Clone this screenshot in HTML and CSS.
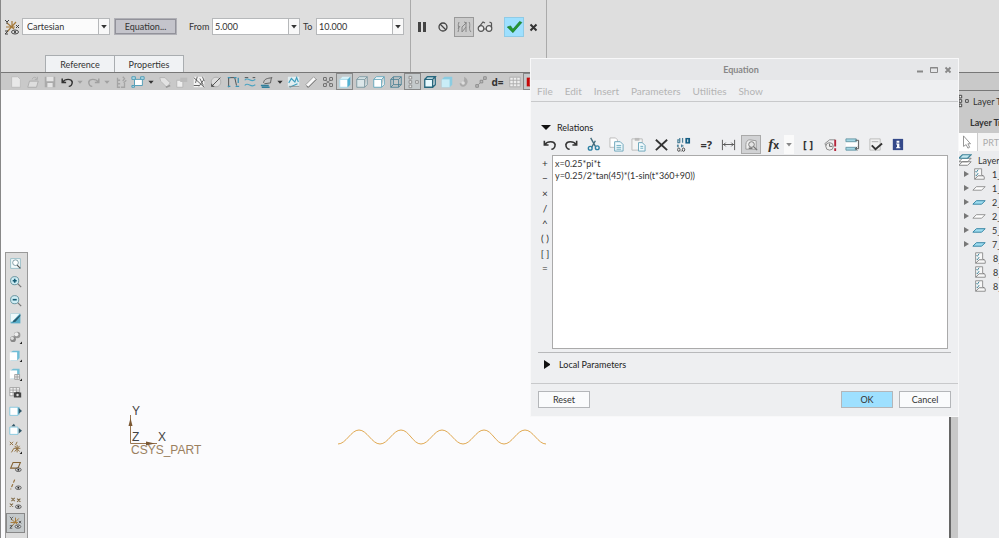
FILE: index.html
```html
<!DOCTYPE html>
<html lang="en">
<head>
<meta charset="utf-8">
<title>Equation</title>
<link rel="stylesheet" href="styles.css">
</head>
<body>
<svg class="defs" aria-hidden="true">
  <symbol id="new" viewBox="0 0 16 16"><path d="M3 2h7l3 3v9H3z" fill="#e8e8e8" stroke="#bbb"/></symbol>
  <symbol id="open" viewBox="0 0 16 16"><path d="M2 14l2-7h10l-2 7z" fill="#dedede" stroke="#aaa"/><path d="M7 5c1-3 4-3 5-1m1-2v3h-3" fill="none" stroke="#aaa"/></symbol>
  <symbol id="save" viewBox="0 0 16 16"><path d="M2 2h12v12H2z" fill="#aaa"/><path d="M4 2h8v5H4zM5 9h6v5H5z" fill="#e4e4e4"/></symbol>
  <symbol id="undo" viewBox="0 0 16 16"><path d="M3 8c3-4 10-4 11 0 0 3-2 5-4 5M2.500 4v4.500H7" fill="none" stroke="currentColor" stroke-width="1.700"/></symbol>
  <symbol id="redo" viewBox="0 0 16 16"><path d="M13 8C10 4 3 4 2 8c0 3 2 5 4 5M13.500 4v4.500H9" fill="none" stroke="currentColor" stroke-width="1.700"/></symbol>
  <symbol id="caret" viewBox="0 0 10 16"><path d="M2 6.500h6l-3 3.500z" fill="currentColor"/></symbol>
  <symbol id="regen" viewBox="0 0 16 16"><path d="M4 3v11h3M4 6h3M4 10h3M10 2l2 2-2 3M14 6l-3 3m1 0v5H8" fill="none" stroke="#a4a4a4" stroke-width="1.500"/></symbol>
  <symbol id="windows" viewBox="0 0 16 16"><path d="M1 2h4v3H1zM11 2h4v3h-4zM1 12h3v2H1z" fill="#b9dfea" stroke="#4697b4"/><path d="M4 5h9v7H4z" fill="#fff" stroke="#4697b4"/></symbol>
  <symbol id="tag" viewBox="0 0 16 16"><path d="M2 3h6l6 6-4 5-7-7z" fill="#e2e2e2" stroke="#b2b2b2"/><path d="M9 14l5-2" stroke="#999" stroke-width="2"/></symbol>
  <symbol id="stack" viewBox="0 0 16 16"><path d="M2 6h7v8H2z" fill="#eee" stroke="#b4b4b4"/><path d="M6 3h8v5H6z" fill="#bbb"/></symbol>
  <symbol id="datum" viewBox="0 0 16 16"><path d="M2 2h12v12H2z" fill="#f3f3f3"/><path d="M2 3l12 11M6 2L4 9m8-7l2 5M2 12h6M9 4l4 8M13 6L8 13" fill="none" stroke="#555"/></symbol>
  <symbol id="circle" viewBox="0 0 16 16"><circle cx="8" cy="8" r="5.500" fill="#ddd" stroke="#aaa"/><path d="M3 13L13 3M3 10v3h3" fill="none" stroke="#444"/></symbol>
  <symbol id="poly" viewBox="0 0 16 16"><path d="M3 14V3h7l2 9" fill="none" stroke="#444"/><path d="M2 3h3M9 3h3M2 13h3M11 13h4M14 3v6" stroke="#3c96b7" stroke-width="1.500"/></symbol>
  <symbol id="wave" viewBox="0 0 16 16"><path d="M2 3h4m5 0h3" stroke="#444"/><path d="M2 6c4-5 7 4 12-1M2 12c4-5 7 4 12-1" fill="none" stroke="#4ba3c1" stroke-width="1.300"/></symbol>
  <symbol id="surf" viewBox="0 0 16 16"><path d="M1 12h9M2 14h9" stroke="#33809c" stroke-width="1.500"/><path d="M4 9c1-5 4-5 10-6M5 10l7-1 1-6" fill="none" stroke="#555"/></symbol>
  <symbol id="graph" viewBox="0 0 16 16"><path d="M1 2h13v12H1z" fill="#e1eef1"/><path d="M2 9l3-5 4 4 2-5 2 5M3 14l9-4" fill="none" stroke="#3f9fbe" stroke-width="1.300"/><path d="M2 13h12" stroke="#888"/></symbol>
  <symbol id="ruler" viewBox="0 0 16 16"><path d="M2 11l9-9 3 3-9 9z" fill="#f8f8f8" stroke="#999"/><path d="M3 13l2 1 9-9" fill="none" stroke="#666"/></symbol>
  <symbol id="pattern" viewBox="0 0 16 16"><path d="M3 4l10 8M3 12l10-8" stroke="#777"/><path d="M3 3h3v3H3zM10 3h3v3h-3zM3 10h3v3H3zM10 10h3v3h-3z" fill="#eee" stroke="#555"/></symbol>
  <symbol id="shaded" viewBox="0 0 16 16"><path d="M2 5l3-3h9l-3 3z" fill="#d7f3fa"/><path d="M2 5h9v9H2z" fill="#fff" stroke="#a3d8e8"/><path d="M11 5l3-3v9l-3 3z" fill="#52b2d3"/></symbol>
  <symbol id="hidden" viewBox="0 0 16 16"><path d="M2 5h9v9H2zM2 5l3-3h9l-3 3m3-3v9l-3 3" fill="#dce7e9" stroke="#77959e"/></symbol>
  <symbol id="nohidden" viewBox="0 0 16 16"><path d="M2 5h9v9H2zM2 5l3-3h9l-3 3m3-3v9l-3 3" fill="#fff" stroke="#5aa2b9"/></symbol>
  <symbol id="wire" viewBox="0 0 16 16"><path d="M2 5h9v9H2zM5 2h9v9H5zM2 5l3-3m6 3l3-3m-3 12l3-3M2 14l3-3" fill="none" stroke="#487f92"/></symbol>
  <symbol id="tree" viewBox="0 0 16 16"><path d="M3.500 1.500h3v3h-3zM3.500 6.500h3v3h-3zM3.500 11.500h3v3h-3zM11 6.500h3v3h-3z" fill="#eee" stroke="currentColor"/></symbol>
  <symbol id="darkcube" viewBox="0 0 16 16"><path d="M2 5h9v9H2zM2 5l3-3h9l-3 3m3-3v9l-3 3" fill="#e8faff" stroke="#28677d" stroke-width="1.500"/></symbol>
  <symbol id="bluecube" viewBox="0 0 16 16"><path d="M2 5l3-3h9v9l-3 3H2z" fill="#8bcce1"/><path d="M2 5h9v9H2z" fill="#c9edf7"/></symbol>
  <symbol id="sphere" viewBox="0 0 16 16"><path d="M8 2c4 2 6 6 2 10-3 3-7 1-7-3 3 2 6-2 5-7z" fill="#aaa"/><circle cx="7" cy="9" r="2" fill="#ddd"/></symbol>
  <symbol id="links" viewBox="0 0 16 16"><path d="M3 13L13 3" stroke="#777" stroke-dasharray="2 1"/><path d="M2 11h3v3H2zM7 6h3v3H7zM11 2h3v3h-3z" fill="#bbb" stroke="#888"/></symbol>
  <symbol id="table" viewBox="0 0 16 16"><path d="M2 2.500h12v11H2zM2 6h12M2 10h12M6 3v10M10 3v10" fill="#eee" stroke="#aaa"/></symbol>
  <symbol id="red" viewBox="0 0 16 16"><path d="M2 3h12v10H2z" fill="#c40808"/><path d="M6 4v8" stroke="#fff"/></symbol>
  <symbol id="csys" viewBox="0 0 16 16"><path d="M8 8V2M2 8h9M3 13L12 3M3 4l7 6" stroke="#a57a3b" fill="none" stroke-width="1.200"/><path d="M1 1l2 2 2-2M3 3v2M12 6l3 3m0-3l-3 3M1 12h3l-3 3h3" fill="none" stroke="#444"/><ellipse cx="11" cy="13" rx="3.500" ry="2" fill="#ddd" stroke="#444"/><circle cx="11" cy="13" r="1" fill="#222"/></symbol>
  <symbol id="pause" viewBox="0 0 16 16"><path d="M4 3h3v10H4zM9 3h3v10H9z" fill="#444"/></symbol>
  <symbol id="ban" viewBox="0 0 16 16"><circle cx="8" cy="8" r="4" fill="none" stroke="#444" stroke-width="1.300"/><path d="M5 5l6 6" stroke="#444" stroke-width="1.300"/></symbol>
  <symbol id="attach" viewBox="0 0 16 16"><path d="M3 3c-2 4 1 6-1 10M13 3c2 3-1 7 2 10M6 13V8l4-4v4zM10 8v5M4 7l-2 3M8 3l3 1" fill="none" stroke="#888"/></symbol>
  <symbol id="glasses" viewBox="0 0 16 16"><g fill="#eee" stroke="#555" stroke-width="1.200"><circle cx="4" cy="9.500" r="2.800"/><circle cx="12" cy="9.500" r="2.800"/><path d="M7 10h2M2 8l4-5 2 1M14.500 9V4l-2-1" fill="none"/></g></symbol>
  <symbol id="check" viewBox="0 0 16 16"><path d="M2 8l3-1 2 3 6-7 2 1-8 9z" fill="#249832" stroke="#14691f" stroke-width=".5"/></symbol>
  <symbol id="x" viewBox="0 0 16 16"><path d="M4.500 5.500l6 6m0-6l-6 6" stroke="currentColor" stroke-width="2"/></symbol>
  <symbol id="zoomfit" viewBox="0 0 16 16"><path d="M2 2h12v12H2z" fill="#f3fafb" stroke="#8bb7c3"/><circle cx="8" cy="7" r="3.500" fill="#fff" stroke="#6d8e97"/><path d="M10 10l4 4" stroke="#555" stroke-width="1.500"/></symbol>
  <symbol id="zoomin" viewBox="0 0 16 16"><circle cx="7" cy="7" r="5" fill="#cfedf4" stroke="#4f8290"/><path d="M11 11l4 4" stroke="#777" stroke-width="1.500"/><path d="M4.500 7h5M7 4.500v5" stroke="#145b73" stroke-width="2"/></symbol>
  <symbol id="zoomout" viewBox="0 0 16 16"><circle cx="7" cy="7" r="5" fill="#cfedf4" stroke="#4f8290"/><path d="M11 11l4 4" stroke="#777" stroke-width="1.500"/><path d="M4.500 7h5" stroke="#145b73" stroke-width="2"/></symbol>
  <symbol id="repaint" viewBox="0 0 16 16"><path d="M2 2h12v12H2z" fill="#59aeca"/><path d="M2 2h11L4 12H2z" fill="#edf9fb"/><path d="M14 3l-8 7-2 3 4-1 6-7" fill="#285c6f"/></symbol>
  <symbol id="render" viewBox="0 0 16 16"><circle cx="10" cy="5" r="4" fill="#999"/><circle cx="9" cy="4" r="2.500" fill="#eee"/><circle cx="5" cy="10" r="3.500" fill="#888"/><circle cx="4" cy="9" r="2" fill="#ddd"/><path d="M16 16v-3l-3 3z" fill="#222"/></symbol>
  <symbol id="views" viewBox="0 0 16 16"><path d="M2 4l3-2h8v9l-3 3H2z" fill="#70bdd6"/><path d="M1 4h9v10H1z" fill="#fff"/><path d="M16 16v-3l-3 3z" fill="#222"/></symbol>
  <symbol id="style" viewBox="0 0 16 16"><path d="M2 3l3-2h8v9l-3 3H2z" fill="#75bfd6"/><path d="M1 3h9v10H1z" fill="#fff"/><path d="M7 8h6v6H7zM7 11h6M10 8v6" fill="#eee" stroke="#999"/><path d="M16 16v-3l-3 3z" fill="#222"/></symbol>
  <symbol id="camera" viewBox="0 0 16 16"><path d="M1 2h12v10H1zM1 5h12M1 8h12M5 2v10M9 2v10" fill="#f8f8f8" stroke="#999"/><path d="M6 8h2l1-1h3l1 1h2v6H6z" fill="#444"/><circle cx="10.500" cy="11" r="1.500" fill="#ddd"/></symbol>
  <symbol id="persp" viewBox="0 0 16 16"><path d="M1 4h10v10H1z" fill="#fff" stroke="#76c4de"/><path d="M11 4h2v9h-2z" fill="#68b6d0"/><path d="M12 5l4 3.500-4 3.500z" fill="#33596a"/></symbol>
  <symbol id="persp2" viewBox="0 0 16 16"><path d="M1 5h10v9H1z" fill="#fff" stroke="#76c4de"/><path d="M12 6l4 3.500-4 3.500zM3 4l3-3 2 3z" fill="#33596a"/></symbol>
  <symbol id="datums" viewBox="0 0 16 16"><path d="M1 1l4 4m0-4L1 5M10 1L8 5M6 9l-3 5M10 5v9M6 9h8M7 13l6-7M7 6l6 7" stroke="#8f7040" stroke-width="1.200"/><path d="M16 16v-3l-3 3z" fill="#222"/></symbol>
  <symbol id="plane" viewBox="0 0 16 16"><path d="M2 10l3-7h9l-3 7z" fill="none" stroke="#846233" stroke-width="1.300"/><use href="#eye"/></symbol>
  <symbol id="axis" viewBox="0 0 16 16"><path d="M7 2L2 14" stroke="#94703c" stroke-width="1.500" stroke-dasharray="4 2"/><use href="#eye"/></symbol>
  <symbol id="points" viewBox="0 0 16 16"><path d="M3 1l4 4m0-4L3 5m7-3l4 4m0-4l-4 4M1 8l4 4m0-4l-4 4" stroke="#7c6641" stroke-width="1.300"/><use href="#eye"/></symbol>
  <symbol id="eye" viewBox="0 0 16 16"><ellipse cx="11.500" cy="12" rx="3.500" ry="2.200" fill="#ddd" stroke="#444"/><circle cx="11.500" cy="12" r="1.200" fill="#222"/></symbol>
  <symbol id="cut" viewBox="0 0 16 16"><path d="M5 1l5 9M10 4L6 11" stroke="#456e7f" stroke-width="1.500"/><circle cx="4.500" cy="12" r="2" fill="none" stroke="#2d81a4" stroke-width="1.500"/><circle cx="12" cy="11.500" r="2" fill="none" stroke="#2d81a4" stroke-width="1.500"/></symbol>
  <symbol id="copy" viewBox="0 0 16 16"><path d="M1 1h6l2 2v8H1z" fill="#fff" stroke="#bbb"/><path d="M6 5h6l3 3v7H6z" fill="#f2fafd" stroke="#6ba5ba"/><path d="M8 9h5M8 11h5M8 13h5" stroke="#6cacbf"/></symbol>
  <symbol id="paste" viewBox="0 0 16 16"><path d="M1 2h11v12H1z" fill="#f4f4f4" stroke="#bbb"/><path d="M4 1h5v3H4z" fill="#bbb"/><path d="M8 6h4l3 3v6H8z" fill="#f2fafd" stroke="#6ba5ba"/><path d="M10 10h3M10 12h3" stroke="#6cacbf"/></symbol>
  <symbol id="delete" viewBox="0 0 16 16"><path d="M2 3l12 11M14 3L2 14" stroke="#333" stroke-width="2"/></symbol>
  <symbol id="dims" viewBox="0 0 16 16"><path d="M4 1v5M4 3H2v3h2M7 1v5M2 8v3m4-3v3M1 9.500h2m3 0h2" fill="none" stroke="#4c8199" stroke-width="1.300"/><path d="M10 1h5v6h-5z" fill="#145d83"/><path d="M12.500 2.500v3" stroke="#fff"/><ellipse cx="3" cy="13.500" rx="1.300" ry="1.800" fill="none" stroke="#444"/><ellipse cx="8" cy="13.500" rx="1.300" ry="1.800" fill="none" stroke="#444"/><path d="M5 15h1" stroke="#444"/></symbol>
  <symbol id="measure" viewBox="0 0 16 16"><path d="M1.500 3v11M14.500 3v11M2 8h12M5 6L3 8l2 2M11 6l2 2-2 2" fill="none" stroke="#555"/></symbol>
  <symbol id="inspect" viewBox="0 0 16 16"><path d="M2 13V8c0-3 2-5 4-5l7 1v9z" fill="#eee" stroke="#999"/><circle cx="8" cy="8" r="3" fill="#e4e4e4" stroke="#777"/><path d="M10 10l4 4M5 12h4" stroke="#777" stroke-width="1.500"/></symbol>
  <symbol id="clock" viewBox="0 0 16 16"><path d="M2 7l5-4h6M2 7l2 4" fill="none" stroke="#888"/><circle cx="7" cy="10" r="4" fill="#eee" stroke="#888"/><path d="M7 7v3h3" fill="none" stroke="#666"/><path d="M13 3v7M13 12v3" stroke="#b4263b" stroke-width="2"/></symbol>
  <symbol id="relations" viewBox="0 0 16 16"><path d="M1 2h11v3H1zM1 11h11v3H1z" fill="#a5d6e4" stroke="#6799a6"/><path d="M1 6h12v4H1z" fill="#fff"/><path d="M11 3.500h3.500v9H11m2-2l-2 2 2 2" fill="none" stroke="#555"/></symbol>
  <symbol id="verify" viewBox="0 0 16 16"><path d="M2 2h11v12H2z" fill="#f2f2f2" stroke="#bbb"/><path d="M4 5h7" stroke="#aaa"/><path d="M4 9l4 4 7-6" fill="none" stroke="#333" stroke-width="2"/></symbol>
  <symbol id="info" viewBox="0 0 16 16"><path d="M3 2h11v12H3z" fill="#34498a"/><path d="M7 4h3v2H7zM6.500 7H10v4h1v1H6.500v-1h1V8h-1z" fill="#fff"/></symbol>
  <symbol id="layers" viewBox="0 0 16 16"><path d="M1 14l4-4h10l-4 4zM1 10l4-4h10l-4 4z" fill="#fff" stroke="#777"/><path d="M1 6l4-4h10l-4 4z" fill="#c4e7ef" stroke="#3d8299" stroke-width="1.300"/></symbol>
  <symbol id="rules" viewBox="0 0 16 16"><path d="M3 2h8v7l3 2v3H3z" fill="#f7f7f7" stroke="#888"/><path d="M4 5l1 1 2-3M4 9l1 1 2-3" fill="none" stroke="#2a7890"/><path d="M3 14l4-4h6" fill="none" stroke="#777"/></symbol>
  <symbol id="layer" viewBox="0 0 16 16"><path d="M1 10.500l4-4h10l-4 4z" fill="#fff" stroke="#888"/></symbol>
  <symbol id="layerblue" viewBox="0 0 16 16"><path d="M1 10.500l4-4h10l-4 4z" fill="#9fdcef" stroke="#237a9b"/></symbol>
  <symbol id="cursor" viewBox="0 0 16 16"><path d="M4 1v12l3-2 2 4 2-1-2-4h3z" fill="#fff" stroke="#888"/></symbol>
</svg>

<main class="app">
  <header class="ribbon">
    <form class="dashboard">
      <svg class="icon"><use href="#csys"/></svg>
      <span class="combo"><select aria-label="Coordinate type"><option>Cartesian</option></select><svg class="arrow"><use href="#caret"/></svg></span>
      <button type="button" class="equation">Equation...</button>
      <label for="from">From</label>
      <span class="combo"><input id="from" value="5.000"><button type="button" class="arrow" aria-label="From values"><svg><use href="#caret"/></svg></button></span>
      <label for="to" class="to">To</label>
      <span class="combo"><input id="to" value="10.000"><button type="button" class="arrow" aria-label="To values"><svg><use href="#caret"/></svg></button></span>
    </form>
    <div class="confirm">
      <button aria-label="Pause"><svg><use href="#pause"/></svg></button>
      <button aria-label="No preview"><svg><use href="#ban"/></svg></button>
      <button aria-label="Attached" class="pressed"><svg><use href="#attach"/></svg></button>
      <button aria-label="Verify"><svg><use href="#glasses"/></svg></button>
      <button aria-label="Accept" class="accept"><svg><use href="#check"/></svg></button>
      <button aria-label="Quit"><svg><use href="#x"/></svg></button>
    </div>
    <nav class="tabs"><button>Reference</button><button>Properties</button></nav>
  </header>

  <div class="toolbar" role="toolbar" aria-label="Graphics">
    <button aria-label="New"><svg><use href="#new"/></svg></button>
    <button aria-label="Open"><svg><use href="#open"/></svg></button>
    <button aria-label="Save"><svg><use href="#save"/></svg></button>
    <button aria-label="Undo"><svg><use href="#undo"/></svg></button>
    <button aria-label="Undo list" class="drop dim"><svg><use href="#caret"/></svg></button>
    <button aria-label="Redo" class="dim"><svg><use href="#redo"/></svg></button>
    <button aria-label="Redo list" class="drop dim"><svg><use href="#caret"/></svg></button>
    <button aria-label="Regenerate"><svg><use href="#regen"/></svg></button>
    <button aria-label="Windows"><svg><use href="#windows"/></svg></button>
    <button aria-label="Window list" class="drop"><svg><use href="#caret"/></svg></button>
    <button aria-label="Tag"><svg><use href="#tag"/></svg></button>
    <button aria-label="Stack"><svg><use href="#stack"/></svg></button>
    <button aria-label="Datum"><svg><use href="#datum"/></svg></button>
    <button aria-label="Circle"><svg><use href="#circle"/></svg></button>
    <button aria-label="Section"><svg><use href="#poly"/></svg></button>
    <button aria-label="Curve"><svg><use href="#wave"/></svg></button>
    <button aria-label="Surface"><svg><use href="#surf"/></svg></button>
    <button aria-label="Surface list" class="drop"><svg><use href="#caret"/></svg></button>
    <button aria-label="Graph"><svg><use href="#graph"/></svg></button>
    <button aria-label="Measure"><svg><use href="#ruler"/></svg></button>
    <button aria-label="Pattern"><svg><use href="#pattern"/></svg></button>
    <button aria-label="Shaded" class="pressed"><svg><use href="#shaded"/></svg></button>
    <button aria-label="Hidden line"><svg><use href="#hidden"/></svg></button>
    <button aria-label="No hidden"><svg><use href="#nohidden"/></svg></button>
    <button aria-label="Wireframe"><svg><use href="#wire"/></svg></button>
    <button aria-label="Layers" class="pressed gray"><svg><use href="#tree"/></svg></button>
    <button aria-label="Orient"><svg><use href="#darkcube"/></svg></button>
    <button aria-label="Model"><svg><use href="#bluecube"/></svg></button>
    <button aria-label="Appearance"><svg><use href="#sphere"/></svg></button>
    <button aria-label="Links"><svg><use href="#links"/></svg></button>
    <button class="dimension">d=</button>
    <button aria-label="Family table"><svg><use href="#table"/></svg></button>
    <button aria-label="Stop" class="pressed"><svg><use href="#red"/></svg></button>
  </div>

  <div class="workspace">
    <section class="canvas">
      <div class="viewbar" role="toolbar" aria-label="View">
        <button aria-label="Refit"><svg><use href="#zoomfit"/></svg></button>
        <button aria-label="Zoom in"><svg><use href="#zoomin"/></svg></button>
        <button aria-label="Zoom out"><svg><use href="#zoomout"/></svg></button>
        <button aria-label="Repaint"><svg><use href="#repaint"/></svg></button>
        <button aria-label="Rendering"><svg><use href="#render"/></svg></button>
        <button aria-label="Saved views"><svg><use href="#views"/></svg></button>
        <button aria-label="Display style"><svg><use href="#style"/></svg></button>
        <button aria-label="View manager"><svg><use href="#camera"/></svg></button>
        <button aria-label="Perspective"><svg><use href="#persp"/></svg></button>
        <button aria-label="Orientation"><svg><use href="#persp2"/></svg></button>
        <button aria-label="Datum display"><svg><use href="#datums"/></svg></button>
        <button aria-label="Plane display"><svg><use href="#plane"/></svg></button>
        <button aria-label="Axis display"><svg><use href="#axis"/></svg></button>
        <button aria-label="Point display"><svg><use href="#points"/></svg></button>
        <button aria-label="Csys display" class="pressed"><svg><use href="#csys"/></svg></button>
      </div>
      <svg class="model csys" viewBox="0 0 90 60">
        <path d="M5.500 10v28.500H32" fill="none" stroke="#9a7650"/>
        <path d="M5.500 13l-2 8h4zM30 38.500l-9-2v4z" fill="#7b5833"/>
        <g fill="#444"><text x="7" y="10">Y</text><text x="7" y="36">Z</text><text x="33" y="36">X</text></g>
        <text class="name" x="6" y="49">CSYS_PART</text>
      </svg>
      <svg class="model curve" viewBox="0 0 212 20">
        <path d="M2 16C10 16 15 2 23 2s13 14 21 14S57 2 65 2s12 14 20 14S98 2 106 2s13 14 21 14 13-14 21-14 12 14 20 14 13-14 21-14 13 14 21 14" fill="none" stroke="#e0a850"/>
      </svg>
    </section>
    <aside class="layers">
      <div class="band"></div>
      <h2><svg><use href="#tree"/></svg>Layer Tree</h2>
      <h3>Layer Tree</h3>
      <div class="filter"><button aria-label="Select"><svg><use href="#cursor"/></svg></button><span>PRT</span></div>
      <ul>
        <li class="root"><svg><use href="#layers"/></svg>Layers</li>
        <li><i></i><svg><use href="#rules"/></svg>1_</li>
        <li><i></i><svg><use href="#layer"/></svg>1_</li>
        <li><i></i><svg><use href="#layerblue"/></svg>2_</li>
        <li><i></i><svg><use href="#layer"/></svg>2_</li>
        <li><i></i><svg><use href="#layerblue"/></svg>5_</li>
        <li><i></i><svg><use href="#layerblue"/></svg>7_</li>
        <li class="leaf"><svg><use href="#rules"/></svg>8_</li>
        <li class="leaf"><svg><use href="#rules"/></svg>8_</li>
        <li class="leaf"><svg><use href="#rules"/></svg>8_</li>
      </ul>
    </aside>
  </div>

  <section class="dialog" role="dialog" aria-label="Equation">
    <header class="titlebar">
      <h1>Equation</h1>
      <button aria-label="Minimize"><svg viewBox="0 0 8 8"><path d="M1 5.500h6" stroke="currentColor" stroke-width="2"/></svg></button>
      <button aria-label="Maximize"><svg viewBox="0 0 8 8"><path d="M.5 1.500h7v5h-7zM0 2h8" fill="none" stroke="currentColor"/></svg></button>
      <button aria-label="Close"><svg viewBox="0 0 8 8"><path d="M1.500 1.500l5 5m0-5l-5 5" stroke="currentColor" stroke-width="1.800"/></svg></button>
    </header>
    <nav class="menu"><button>File</button><button>Edit</button><button>Insert</button><button>Parameters</button><button>Utilities</button><button>Show</button></nav>
    <div class="body">
      <button class="section"><i class="down"></i>Relations</button>
      <div class="tools" role="toolbar" aria-label="Relations">
        <button aria-label="Undo"><svg><use href="#undo"/></svg></button>
        <button aria-label="Redo"><svg><use href="#redo"/></svg></button>
        <button aria-label="Cut"><svg><use href="#cut"/></svg></button>
        <button aria-label="Copy"><svg><use href="#copy"/></svg></button>
        <button aria-label="Paste"><svg><use href="#paste"/></svg></button>
        <button aria-label="Delete"><svg><use href="#delete"/></svg></button>
        <button aria-label="Switch dimensions"><svg><use href="#dims"/></svg></button>
        <button class="glyph">=?</button>
        <button aria-label="Dimension"><svg><use href="#measure"/></svg></button>
        <button aria-label="Units" class="pressed"><svg><use href="#inspect"/></svg></button>
        <span class="fx"><button class="glyph"><em>f</em>x</button><button class="drop" aria-label="Functions"><svg><use href="#caret"/></svg></button></span>
        <button class="glyph brackets">[ ]</button>
        <button aria-label="Time"><svg><use href="#clock"/></svg></button>
        <button aria-label="Sort"><svg><use href="#relations"/></svg></button>
        <button aria-label="Verify"><svg><use href="#verify"/></svg></button>
        <button aria-label="Information"><svg><use href="#info"/></svg></button>
      </div>
      <div class="editor">
        <div class="ops"><button>+</button><button>−</button><button>×</button><button>/</button><button>^</button><button>( )</button><button>[ ]</button><button>=</button></div>
        <textarea aria-label="Relations" spellcheck="false">x=0.25*pi*t
y=0.25/2*tan(45)*(1-sin(t*360+90))</textarea>
      </div>
      <button class="section local"><i class="right"></i>Local Parameters</button>
    </div>
    <footer><button>Reset</button><button class="ok">OK</button><button>Cancel</button></footer>
  </section>
</main>
</body>
</html>
```
FILE: styles.css
```css
* { box-sizing: border-box; }
html, body { height: 100%; margin: 0; }
body, button, input, select, textarea { font-family: Lato, "Noto Sans", sans-serif; font-size: 9px; color: #333; }
body { overflow: hidden; }
button { display: inline-flex; align-items: center; justify-content: center; padding: 0; border: 0; background: none; }
h1, h2, h3, ul { margin: 0; padding: 0; font-size: inherit; list-style: none; }
svg { display: block; width: 16px; height: 16px; flex: none; }
.defs { position: absolute; width: 0; height: 0; }

.app { position: relative; display: flex; flex-direction: column; height: 100%; border-left: 1px solid #888; background: #fbfbfd; overflow: hidden; }
.ribbon { display: grid; grid-template-columns: 409px 137px 1fr; grid-template-rows: 55px 17px; height: 72px; flex: none; background: #dedede; }
.dashboard { display: flex; align-items: center; padding: 0 4px 2px 3px; }
.dashboard > .icon { margin-right: 2px; }
.combo { position: relative; display: flex; width: 88px; height: 17px; border: 1px solid #b6b8ba; background: #fbfbfb; }
.combo select, .combo input { width: 100%; min-width: 0; height: 15px; padding: 0 4px; border: 0; background: #fbfbfb; appearance: none; }
.combo input { padding: 0 2px; background: #fff; }
.combo .arrow { width: 11px; height: 15px; flex: none; border-left: 1px solid #b6b8ba; background: #f8f8f8; }
.combo svg { width: 10px; height: 15px; }
.combo svg.arrow { pointer-events: none; }
.equation { width: 63px; height: 17px; margin: 0 12px 0 4px; border: 2px solid #92929a; background: #c4c4cb; outline: 1px solid #b0b0b6; outline-offset: -1px; }
label { width: 23px; }
label.to { width: 16px; padding-left: 3px; }
.confirm { grid-row: 1 / 3; grid-column: 2; display: flex; gap: 1px; padding: 17px 0 0 1px; border: 1px solid #aaa; border-width: 0 1px; }
.confirm button { width: 20px; height: 20px; }
.confirm .pressed { border: 1px solid #999; background: #cacaca; }
.confirm .accept { margin-left: 8px; background: #9ee0ff; border: 1px solid #8fcbe6; }
.confirm .accept svg { width: 18px; height: 18px; }
.confirm button:last-child { margin-left: -1px; }
.tabs { grid-area: 2 / 1; display: flex; padding-left: 44px; }
.tabs button { width: 70px; height: 17px; border: 1px solid #a9adb0; border-bottom: 0; background: #f0f2f4; }
.tabs button + button { margin-left: -1px; }

.toolbar { display: flex; height: 18px; flex: none; padding-left: 6px; background: #c9c9c9; border-top: 1px solid #777; }
.toolbar button { width: 17px; height: 17px; }
.toolbar svg { width: 14px; height: 14px; }
.toolbar .drop { width: 10px; }
.toolbar .drop svg { width: 10px; }
.toolbar .dim { color: #a0a0a0; }
.pressed { border: 1px solid #888; background: #c4c9cb; }
.toolbar .gray { color: #888; }
.toolbar .dimension { font: bold 10px "Noto Sans", sans-serif; }

.workspace { display: flex; flex: 1; min-height: 0; }
.canvas { position: relative; flex: 1; padding: 162px 0 0 4px; background: #fbfbfd; border-right: 2px solid #666; }
.viewbar { display: flex; flex-direction: column; width: 23px; height: 300px; padding: 1px 0 18px; border: 1px solid #999; background: #dcdcdc; }
.viewbar button { flex: 1; width: 19px; }
.viewbar svg { width: 13px; height: 13px; }
.model { position: absolute; font-family: "Liberation Sans", sans-serif; font-size: 12px; }
.csys { left: 124px; top: 315px; width: 90px; height: 60px; }
.csys .name { fill: #9a8060; }
.curve { left: 335px; top: 338px; width: 212px; height: 20px; }

.layers { width: 48px; flex: none; margin-top: -18px; border-left: 7px solid #c8c8c8; background: #ebecee; overflow: hidden; white-space: nowrap; }
.band { height: 19px; background: #c9c9c9; border: 1px solid #777; border-width: 1px 0; }
.layers h2, .layers h3 { display: flex; align-items: center; height: 20px; background: #c9c9c9; font-weight: normal; }
.layers h2 svg { width: 14px; height: 14px; margin-left: -2px; margin-right: 3px; }
.layers h3 { height: 22px; padding-left: 12px; font-weight: bold; }
.filter { display: flex; align-items: center; height: 18px; margin-bottom: 2px; background: #f3f3f3; color: #aaa; }
.filter button { width: 26px; height: 18px; margin-right: 5px; background: #fff; border-right: 1px solid #ccc; }
.filter svg { width: 14px; height: 14px; }
.layers li { display: flex; align-items: center; height: 14px; padding-left: 6px; }
.layers li svg { width: 14px; height: 14px; margin-right: 6px; }
.layers .root { padding-left: 0; }
.layers .leaf { padding-left: 15px; }
.layers i { width: 6px; margin-right: 3px; border: 3px solid transparent; border-left: 5px solid #777; border-right: 0; }

.dialog { position: absolute; left: 529px; top: 58px; display: flex; flex-direction: column; width: 429px; background: #eeeff1; border: 1px solid #f8f8f9; }
.titlebar { display: flex; align-items: center; justify-content: flex-end; gap: 6px; height: 21px; padding-right: 6px; background: #e6e7e9; }
.titlebar h1 { flex: 1; padding-left: 41px; text-align: center; color: #888; }
.titlebar button { color: #888; }
.titlebar svg { width: 8px; height: 8px; }
.menu { display: flex; gap: 12px; height: 22px; padding-left: 6px; border-bottom: 1px solid #c8c9cb; }
.menu button { color: #b4b4b4; font-size: 10px; }
.body { padding: 19px 7px 0; }
.section { display: flex; height: 13px; margin-left: 3px; color: #222; }
.section i { width: 9px; margin-right: 6px; }
.section .down { border: 5px solid transparent; border-top-color: #111; border-bottom: 0; }
.section .right { height: 9px; border: 4px solid transparent; border-left: 6px solid #111; border-right: 0; }
.tools { display: flex; align-items: center; justify-content: space-between; height: 21px; max-width: 365px; margin-left: 3px; }
.tools button { width: 16px; height: 19px; }
.tools svg { width: 15px; height: 15px; }
.tools .pressed { width: 20px; margin: 0 -2px; border-color: #aaa; background: #d1d2d4; }
.tools .glyph { font: bold 11px "Noto Sans", sans-serif; color: #333; }
.glyph em { font-family: "Liberation Serif", serif; font-size: 15px; }
.fx { display: flex; gap: 2px; }
.tools .fx .glyph { font-size: 10px; }
.tools .drop { width: 10px; background: #fafafa; color: #888; }
.tools .drop svg { width: 10px; }
.brackets { white-space: nowrap; }
.editor { display: grid; grid-template-columns: 14px 1fr; margin-right: 3px; }
.ops { display: flex; flex-direction: column; }
.ops button { height: 15px; font-size: 10px; white-space: nowrap; }
textarea { height: 194px; padding: 2px; border: 1px solid #aaa; background: #fff; line-height: 12px; resize: none; }
.local { display: flex; width: 100%; height: 31px; margin: 3px 0 0; padding: 0 0 8px 6px; justify-content: flex-start; border-top: 1px solid #b8b9bb; }
footer { display: flex; gap: 6px; padding: 7px 7px 8px; border-top: 1px solid #c8c9cb; }
footer button { width: 52px; height: 17px; background: #fafbfc; border: 1px solid #b4b6b9; }
footer .ok { margin-left: auto; background: #9ee0ff; }
```
